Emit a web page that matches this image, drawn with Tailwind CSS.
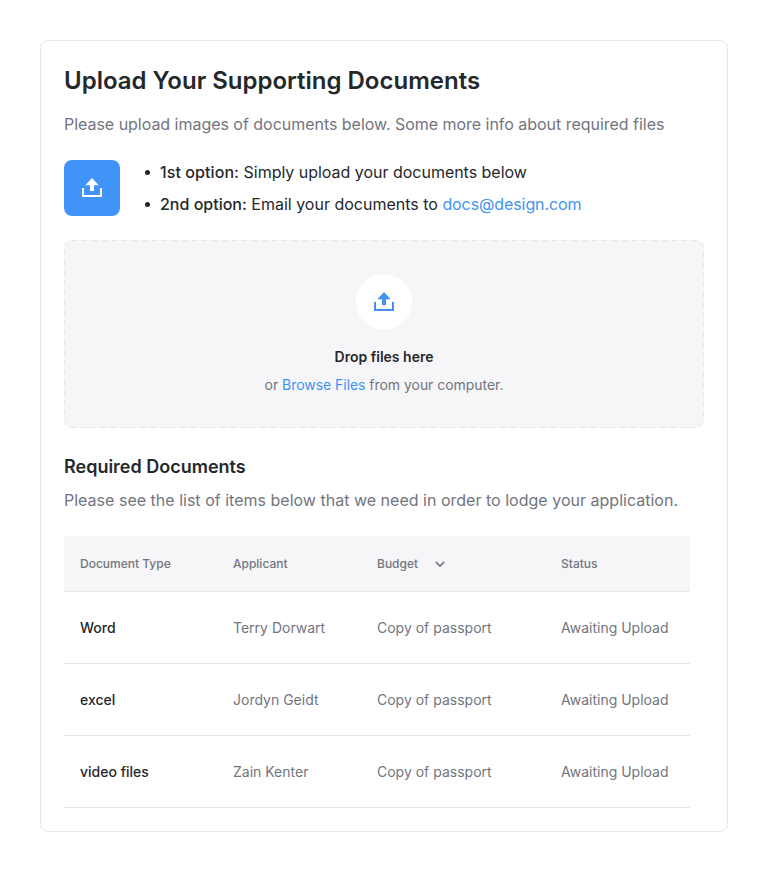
<!DOCTYPE html>
<html lang="en">
<head>
<meta charset="utf-8">
<title>Upload Documents</title>
<script src="https://cdn.jsdelivr.net/npm/@tailwindcss/browser@4"></script>
</head>
<body class="bg-white p-10 font-[Inter,sans-serif] text-[#25282b] antialiased">
<main class="h-[792px] w-[688px] rounded-lg border border-[#e8e8ea] px-[23px] pt-6">
  <h1 class="text-2xl leading-8 font-semibold">Upload Your Supporting Documents</h1>
  <p class="mt-3.5 text-base leading-[26px] tracking-[-0.028px] text-[#72757e]">Please upload images of documents below. Some more info about required files</p>
  <section class="mt-[23px] flex h-14 items-center gap-6">
    <div class="flex size-14 items-center justify-center rounded-lg bg-[#4094f7]">
      <svg class="size-6" viewBox="0 0 24 24" fill="white"><path d="M2 12h2v7h16v-7h2v9H2zM12 2l6.700 7.200H14V15h-4V9.200H5.300z"/></svg>
    </div>
    <ul class="text-base leading-8">
      <li class="flex items-center"><span class="mt-px mr-[10px] ml-px size-[5px] rounded-full bg-[#25282b]"></span><span><b class="font-medium tracking-[0.08px]">1st option:</b> <span class="tracking-[-0.02px]">Simply upload your documents below</span></span></li>
      <li class="flex items-center"><span class="mt-px mr-[10px] ml-px size-[5px] rounded-full bg-[#25282b]"></span><span><b class="font-medium">2nd option:</b> Email your documents to <a class="tracking-[-0.1px] text-[#4094f0]">docs@design.com</a></span></li>
    </ul>
  </section>
  <section class="relative mt-6 flex h-[188px] w-[640px] flex-col items-center rounded-lg bg-[#f6f6f8] pt-[34px]">
    <svg class="absolute inset-0 size-full" fill="none"><rect x=".5" y=".5" width="639" height="187" rx="7.500" stroke="#e6e6e8" stroke-dasharray="5 5"/></svg>
    <div class="flex size-14 items-center justify-center rounded-full bg-white">
      <svg class="size-6" viewBox="0 0 24 24" fill="#4094f0"><path d="M2 12h2v7h16v-7h2v9H2zM12 2l6.700 7.200H14V15h-4V9.200H5.300z"/></svg>
    </div>
    <p class="mt-[15px] text-sm leading-6 font-semibold">Drop files here</p>
    <p class="mt-1 text-sm leading-6 tracking-[-0.04px] text-[#72757e]">or <a class="text-[#4094f0]">Browse Files</a> from your computer.</p>
  </section>
  <h2 class="mt-[26px] text-lg leading-[26px] font-semibold">Required Documents</h2>
  <p class="mt-[7px] text-base leading-[26px] tracking-[0.012px] text-[#72757e]">Please see the list of items below that we need in order to lodge your application.</p>
  <table class="mt-[23px] w-[626px] table-fixed border-separate border-spacing-0 text-left text-sm text-[#72757e] [&_td]:border-b [&_td]:border-[#e6e6e9] [&_th]:border-b [&_th]:border-[#e6e6e9]">
    <colgroup><col class="w-[153px]"><col class="w-36"><col class="w-[184px]"><col class="w-[145px]"></colgroup>
    <thead><tr class="h-14 bg-[#f6f6f8] text-xs">
      <th class="pl-4 font-medium">Document Type</th><th class="pl-4 font-medium">Applicant</th><th class="pl-4 font-medium"><span class="flex items-center gap-4">Budget <svg class="size-3" viewBox="0 0 12 12" fill="none" stroke="currentColor" stroke-width="1.500"><path d="M1.800 3.900 6 8.100 10.200 3.900"/></svg></span></th><th class="pl-4 font-medium">Status</th>
    </tr></thead>
    <tbody>
      <tr class="h-[72px]"><th class="pl-4 font-medium text-[#25282b]">Word</th><td class="pl-4">Terry Dorwart</td><td class="pl-4">Copy of passport</td><td class="pl-4">Awaiting Upload</td></tr>
      <tr class="h-[72px]"><th class="pl-4 font-medium text-[#25282b]">excel</th><td class="pl-4">Jordyn Geidt</td><td class="pl-4">Copy of passport</td><td class="pl-4">Awaiting Upload</td></tr>
      <tr class="h-[72px]"><th class="pl-4 font-medium text-[#25282b]">video files</th><td class="pl-4">Zain Kenter</td><td class="pl-4">Copy of passport</td><td class="pl-4">Awaiting Upload</td></tr>
    </tbody>
  </table>
</main>
</body>
</html>
